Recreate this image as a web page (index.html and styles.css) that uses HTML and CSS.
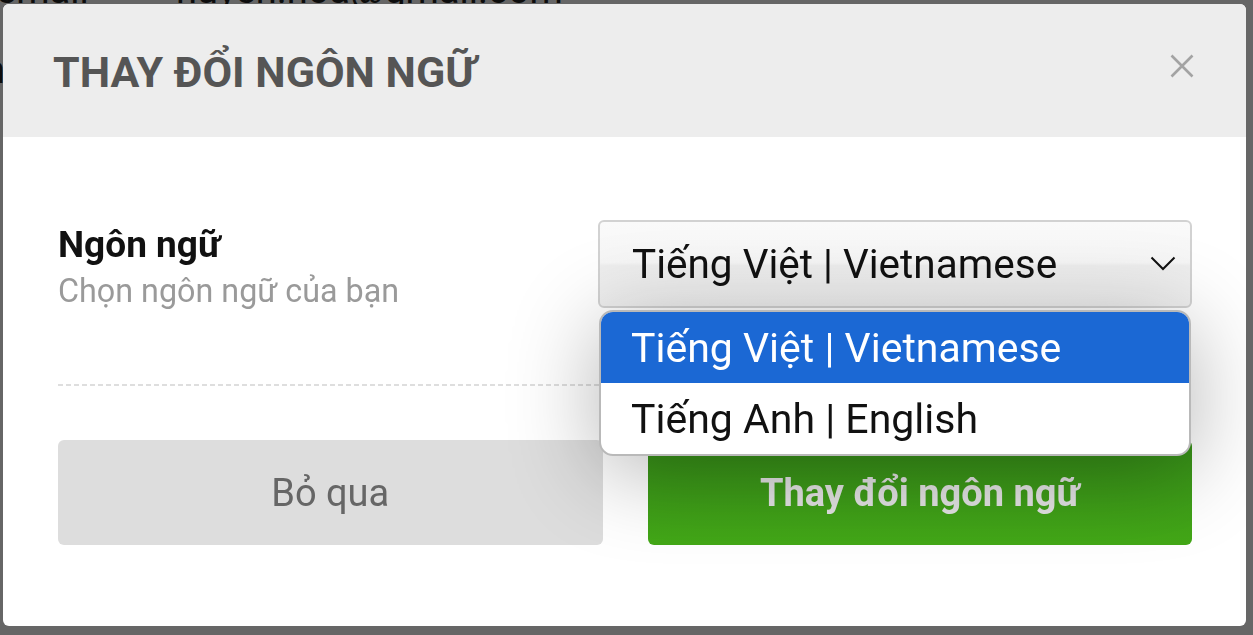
FILE: index.html
```html
<!DOCTYPE html>
<html lang="vi">
<head>
<meta charset="utf-8">
<title>Thay đổi ngôn ngữ</title>
<link rel="stylesheet" href="styles.css">
</head>
<body>
<div class="page">
  <div class="page-row"><span class="page-key">email</span><span class="page-val">huyen.hoa@gmail.com</span></div>
  <div class="page-side">
    <span class="page-mark">n</span>
    <span class="page-mark">/</span>
    <span class="page-mark">/</span>
  </div>
</div>
<div class="overlay">
  <div class="modal">
    <div class="modal-head">
      <h2 class="modal-title">THAY ĐỔI NGÔN NGỮ</h2>
      <button class="close" aria-label="Đóng">
        <svg viewBox="0 0 24 24" width="24" height="24"><path d="M1.5 1.5 L22.5 22.5 M22.5 1.5 L1.5 22.5" stroke="#a3a3a3" stroke-width="2.6" fill="none"/></svg>
      </button>
    </div>
    <div class="modal-body">
      <div class="field">
        <div class="field-label">
          <div class="field-name">Ngôn ngữ</div>
          <div class="field-hint">Chọn ngôn ngữ của bạn</div>
        </div>
        <div class="select-wrap">
          <div class="select">
            <span class="select-value">Tiếng Việt | Vietnamese</span>
            <svg class="chevron" viewBox="0 0 26 15" width="26" height="15"><path d="M1.5 1.5 L13 13 L24.5 1.5" stroke="#111" stroke-width="2" fill="none"/></svg>
          </div>
          <ul class="options">
            <li class="option option-active">Tiếng Việt | Vietnamese</li>
            <li class="option">Tiếng Anh | English</li>
          </ul>
        </div>
      </div>
      <div class="divider"></div>
      <div class="actions">
        <button class="btn btn-cancel">Bỏ qua</button>
        <button class="btn btn-primary">Thay đổi ngôn ngữ</button>
      </div>
    </div>
  </div>
</div>
</body>
</html>
```

FILE: styles.css
```css
* { box-sizing: border-box; }
html, body { margin: 0; padding: 0; }
body {
  font-family: Roboto, "Noto Sans", "Liberation Sans", sans-serif;
  background: #fff;
  width: 1253px;
  height: 635px;
  overflow: hidden;
}
.page {
  color: #222;
  font-size: 38px;
}
.page-row {
  display: flex;
  margin-top: -32px;
  height: 44px;
}
.page-key { width: 180px; margin-left: -4px; }
.page-side {
  display: flex;
  flex-direction: column;
  margin-top: 26px;
  margin-left: -16px;
  font-size: 38px;
  line-height: 64px;
}
.page-mark { display: block; }

.overlay {
  position: fixed;
  inset: 0;
  background: rgba(0, 0, 0, 0.6);
  padding: 4px 7px 9px 3px;
}
.modal {
  width: 1243px;
  height: 622px;
  background: #fff;
  border-radius: 6px;
  overflow: hidden;
  display: flex;
  flex-direction: column;
}
.modal-head {
  height: 133px;
  background: #ededed;
  display: flex;
  align-items: center;
  justify-content: space-between;
  padding: 0 52px 0 50px;
}
.modal-title {
  margin: 0;
  font-size: 43px;
  font-weight: 700;
  color: #555;
  padding-top: 2px;
}
.close {
  border: 0;
  background: transparent;
  padding: 0;
  width: 24px;
  height: 24px;
  margin-top: -9px;
  display: block;
}
.close svg { display: block; }

.modal-body {
  padding: 83px 54px 0 55px;
}
.field {
  display: flex;
  justify-content: space-between;
  align-items: flex-start;
}
.field-label { padding-top: 4px; }
.field-name {
  font-size: 37px;
  font-weight: 700;
  color: #111;
  line-height: 42px;
}
.field-hint {
  font-size: 32.3px;
  color: #9a9a9a;
  line-height: 34px;
  margin-top: 8px;
}
.select-wrap {
  position: relative;
  width: 594px;
}
.select {
  height: 88px;
  border: 2px solid #d2d2d2;
  border-radius: 6px;
  background: linear-gradient(to bottom, #fafafa 0, #f6f6f6 48%, #eeeeee 52%, #f0f0f0 100%);
  display: flex;
  align-items: center;
  justify-content: space-between;
  padding: 0 14px 0 32px;
}
.select-value {
  font-size: 40.5px;
  color: #111;
}
.chevron { display: block; margin-top: -2px; }

.options {
  position: absolute;
  left: 1px;
  right: 1px;
  top: 90px;
  margin: 0;
  padding: 0;
  list-style: none;
  background: #fff;
  border: 2px solid #b9b9b9;
  border-radius: 14px;
  overflow: hidden;
  box-shadow: 0 14px 90px rgba(0, 0, 0, 0.3);
  z-index: 2;
}
.option {
  height: 71px;
  font-size: 41px;
  color: #111;
  display: flex;
  align-items: center;
  padding-left: 30px;
}
.option-active {
  background: #1b68d4;
  color: #fff;
}

.divider {
  margin-top: 76px;
  height: 2px;
  background: repeating-linear-gradient(to right, #dedede 0 5px, transparent 5px 8px);
}
.actions {
  margin-top: 54px;
  display: grid;
  grid-template-columns: 1fr 1fr;
  gap: 45px;
}
.btn {
  height: 105px;
  border: 0;
  border-radius: 6px;
  font-family: inherit;
  font-size: 38px;
}
.btn-cancel {
  background: #dddddd;
  color: #666;
}
.btn-primary {
  background: linear-gradient(to bottom, #378f19 0, #43a817 100%);
  color: #e2e2e2;
  font-weight: 700;
}
```
